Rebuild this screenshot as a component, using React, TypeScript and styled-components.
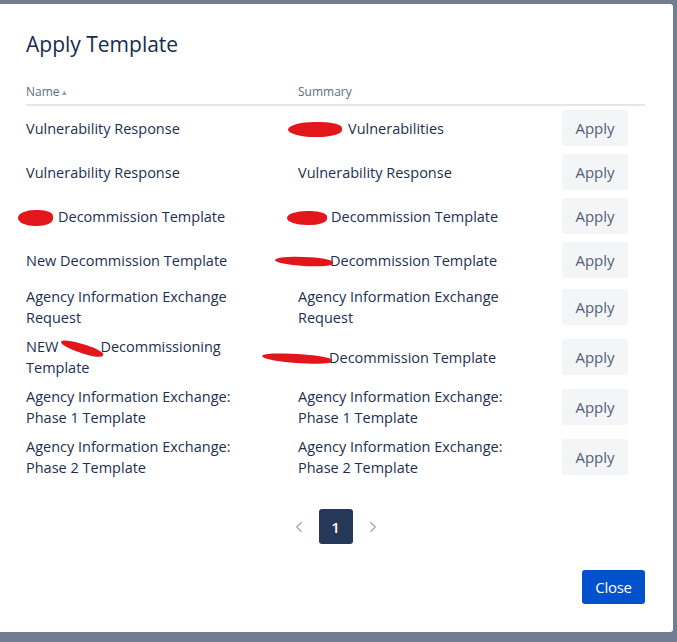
import styled, { createGlobalStyle } from 'styled-components';
import { ChevronLeft, ChevronRight } from 'lucide-react';

const GlobalStyle = createGlobalStyle`
  html, body {
    margin: 0;
    padding: 0;
    background: #727c92;
    font-family: "Open Sans", "Noto Sans", sans-serif;
  }
  * {
    box-sizing: border-box;
  }
`;

const Backdrop = styled.div`
  min-height: 100vh;
  padding: 4px 4px 10px 0;
`;

const Modal = styled.div`
  background: #ffffff;
  border-radius: 0 3px 3px 0;
  height: 628px;
  padding: 26px 28px 0 26px;
  display: flex;
  flex-direction: column;
`;

const Title = styled.h1`
  margin: 0;
  font-size: 21px;
  line-height: 28px;
  font-weight: 500;
  color: #172b4d;
`;

const Table = styled.table`
  margin-top: 26px;
  width: 100%;
  border-collapse: collapse;
  table-layout: fixed;
`;

const HeadCell = styled.th<{ width: number }>`
  width: ${props => props.width}px;
  text-align: left;
  font-size: 12px;
  line-height: 16px;
  font-weight: 500;
  color: #5e6c84;
  padding: 0 0 4px 0;
  border-bottom: 2px solid #e4e6ea;
`;

const SortArrow = styled.span`
  font-size: 9px;
  margin-left: 2px;
  color: #97a0af;
  vertical-align: 1px;
`;

const Cell = styled.td`
  padding: 4px 32px 4px 0;
  font-size: 14.5px;
  line-height: 21px;
  color: #1d2f52;
  vertical-align: middle;
`;

const ActionCell = styled(Cell)`
  padding-right: 0;
`;

const ApplyButton = styled.button`
  width: 66px;
  height: 36px;
  border: none;
  border-radius: 3px;
  background: #f4f5f7;
  color: #505f79;
  font-family: inherit;
  font-size: 15px;
  cursor: pointer;
`;

const Redaction = styled.span<{ w: number; h: number; shift: number; gap: number; tilt?: number }>`
  display: inline-block;
  width: ${props => props.w}px;
  height: ${props => props.h}px;
  margin-left: ${props => props.shift}px;
  margin-right: ${props => props.gap}px;
  background: #e3161b;
  border-radius: 50% 40% 45% 50%;
  vertical-align: middle;
  transform: rotate(${props => props.tilt ?? 0}deg);
`;

const Pagination = styled.nav`
  margin-top: 27px;
  display: flex;
  justify-content: center;
  align-items: center;
  gap: 4px;
`;

const PageArrow = styled.button`
  width: 32px;
  height: 35px;
  border: none;
  background: transparent;
  color: #a5adba;
  display: flex;
  align-items: center;
  justify-content: center;
  padding: 0;
`;

const PageNumber = styled.button<{ active?: boolean }>`
  width: 34px;
  height: 35px;
  border: none;
  border-radius: 3px;
  background: ${props => (props.active ? '#253858' : 'transparent')};
  color: ${props => (props.active ? '#ffffff' : '#42526e')};
  font-family: inherit;
  font-size: 15px;
  font-weight: 600;
`;

const Footer = styled.div`
  margin-top: 26px;
  display: flex;
  justify-content: flex-end;
`;

const CloseButton = styled.button`
  width: 63px;
  height: 34px;
  border: none;
  border-radius: 3px;
  background: #0052cc;
  color: #ffffff;
  font-family: inherit;
  font-size: 15px;
  font-weight: 500;
  letter-spacing: -0.3px;
`;

type Row = { name: React.ReactNode; summary: React.ReactNode };

const rows: Row[] = [
  {
    name: 'Vulnerability Response',
    summary: (
      <>
        <Redaction w={54} h={15} shift={-10} gap={6} />
        Vulnerabilities
      </>
    ),
  },
  { name: 'Vulnerability Response', summary: 'Vulnerability Response' },
  {
    name: (
      <>
        <Redaction w={35} h={16} shift={-8} gap={5} />
        Decommission Template
      </>
    ),
    summary: (
      <>
        <Redaction w={40} h={14} shift={-11} gap={4} />
        Decommission Template
      </>
    ),
  },
  {
    name: 'New Decommission Template',
    summary: (
      <>
        <Redaction w={58} h={9} shift={-23} gap={-3} tilt={3} />
        Decommission Template
      </>
    ),
  },
  { name: 'Agency Information Exchange Request', summary: 'Agency Information Exchange Request' },
  {
    name: (
      <>
        NEW
        <Redaction w={44} h={9} shift={2} gap={-4} tilt={18} />
        Decommissioning Template
      </>
    ),
    summary: (
      <>
        <Redaction w={70} h={9} shift={-36} gap={-3} tilt={4} />
        Decommission Template
      </>
    ),
  },
  {
    name: 'Agency Information Exchange: Phase 1 Template',
    summary: 'Agency Information Exchange: Phase 1 Template',
  },
  {
    name: 'Agency Information Exchange: Phase 2 Template',
    summary: 'Agency Information Exchange: Phase 2 Template',
  },
];

export default function App() {
  return (
    <>
      <GlobalStyle />
      <Backdrop>
        <Modal>
          <Title>Apply Template</Title>
          <Table>
            <thead>
              <tr>
                <HeadCell width={272}>
                  Name<SortArrow>▴</SortArrow>
                </HeadCell>
                <HeadCell width={264}>Summary</HeadCell>
                <HeadCell width={83} />
              </tr>
            </thead>
            <tbody>
              {rows.map((row, i) => (
                <tr key={i}>
                  <Cell>{row.name}</Cell>
                  <Cell>{row.summary}</Cell>
                  <ActionCell>
                    <ApplyButton>Apply</ApplyButton>
                  </ActionCell>
                </tr>
              ))}
            </tbody>
          </Table>
          <Pagination>
            <PageArrow aria-label="Previous">
              <ChevronLeft size={18} strokeWidth={1.8} />
            </PageArrow>
            <PageNumber active>1</PageNumber>
            <PageArrow aria-label="Next">
              <ChevronRight size={18} strokeWidth={1.8} />
            </PageArrow>
          </Pagination>
          <Footer>
            <CloseButton>Close</CloseButton>
          </Footer>
        </Modal>
      </Backdrop>
    </>
  );
}
